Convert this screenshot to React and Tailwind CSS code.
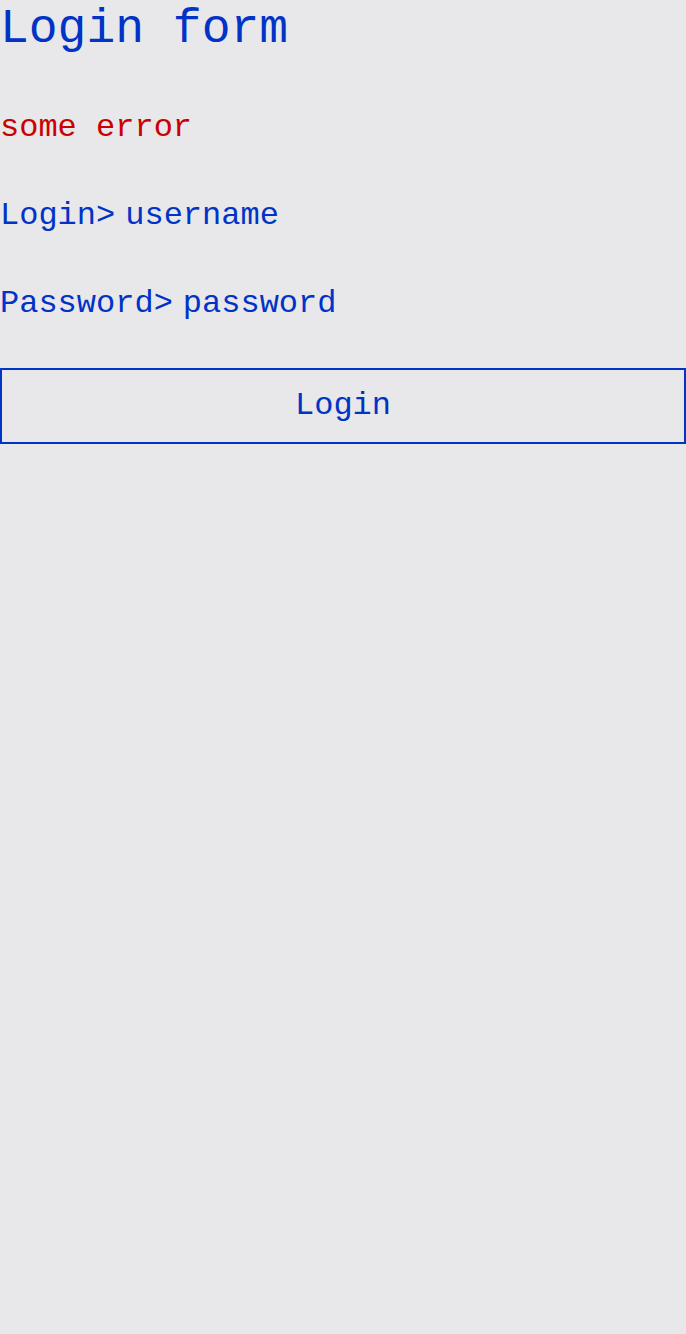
import React from "react";

const mono = { fontFamily: '"Liberation Mono", "DejaVu Sans Mono", monospace' };

export default function App() {
  return (
    <div
      className="min-h-[1334px] w-[686px] bg-[#e8e7ea] text-[#0033c6]"
      style={mono}
    >
      <h1 className="text-[48px] leading-[58px] font-normal">Login form</h1>

      <p className="mt-[52px] text-[32px] leading-[36px] text-[#cc0000]">some error</p>

      <div className="mt-[52px] flex items-center gap-[10px] text-[32px] leading-[36px]">
        <label htmlFor="login">Login&gt;</label>
        <input
          id="login"
          type="text"
          placeholder="username"
          className="flex-1 bg-transparent outline-none placeholder:text-[#0033c6]"
        />
      </div>

      <div className="mt-[52px] flex items-center gap-[10px] text-[32px] leading-[36px]">
        <label htmlFor="password">Password&gt;</label>
        <input
          id="password"
          type="password"
          placeholder="password"
          className="flex-1 bg-transparent outline-none placeholder:text-[#0033c6]"
        />
      </div>

      <button className="mt-[46px] flex h-[76px] w-full items-center justify-center border-2 border-[#0033c6] text-[32px]">
        Login
      </button>
    </div>
  );
}
